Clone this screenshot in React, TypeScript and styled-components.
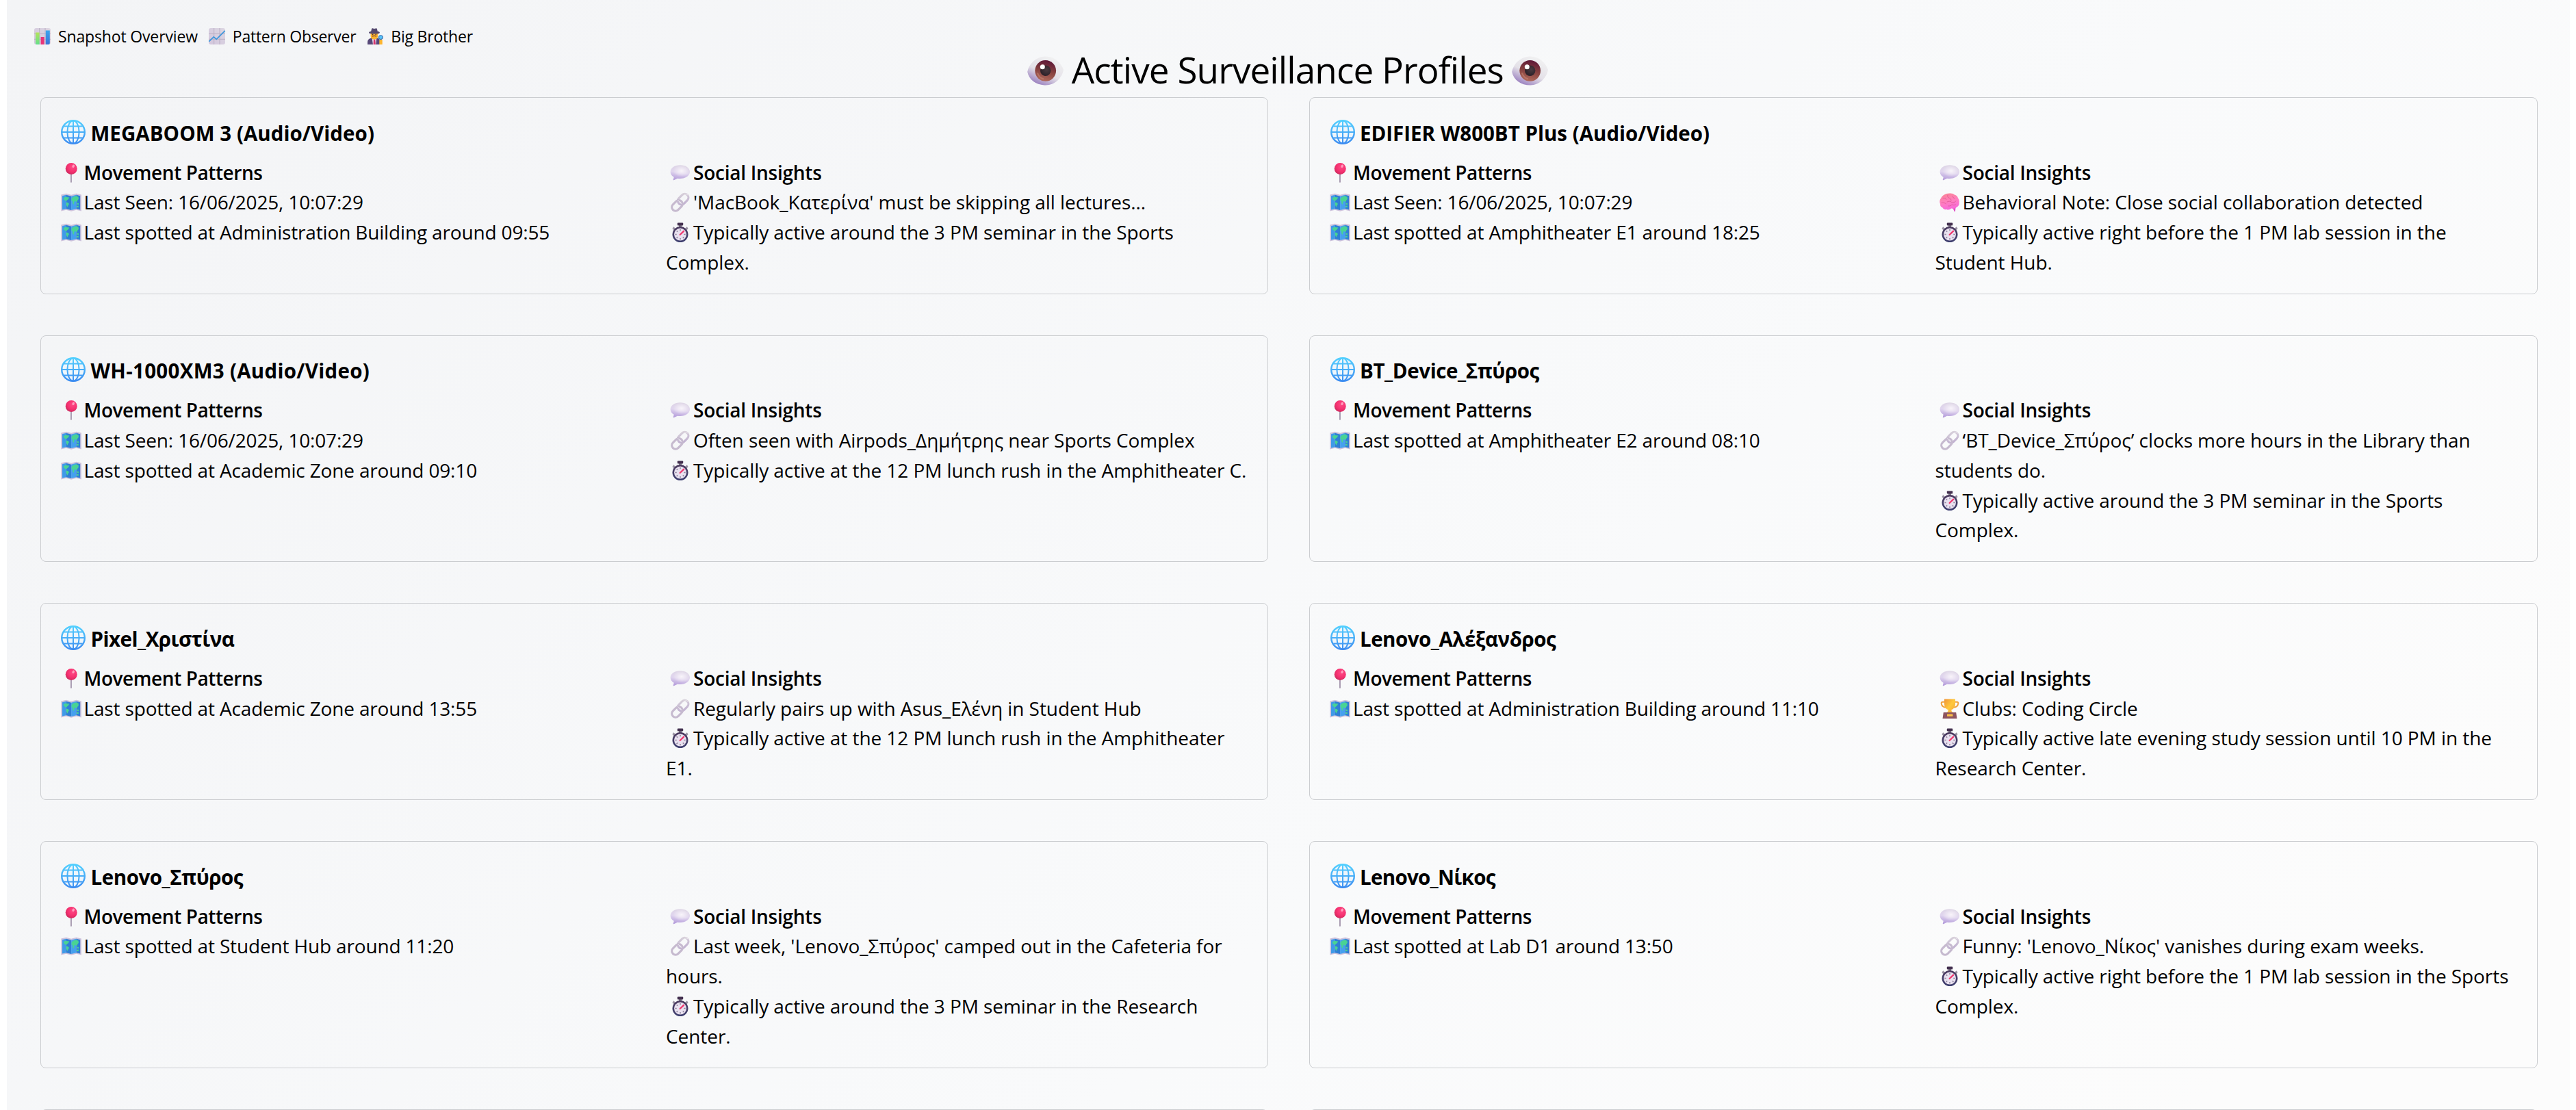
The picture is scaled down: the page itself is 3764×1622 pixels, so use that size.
import React from 'react';
import styled, { createGlobalStyle } from 'styled-components';

const GlobalStyle = createGlobalStyle`
  *, *::before, *::after { box-sizing: border-box; }
  body {
    margin: 0;
    background: #fff;
    color: #000;
    font-family: "Open Sans", "Noto Sans", sans-serif;
    overflow: hidden;
  }
`;

const Page = styled.main`
  height: 1622px;
  margin: 0 9px 0 10px;
  padding: 40px 47.5px 0 40px;
  overflow: hidden;
  background: linear-gradient(135deg, #f3f4f6 0%, #f9fafb 60%, #fcfcfc 90%);
`;

const Nav = styled.nav`
  display: flex;
  gap: 16px;
  height: 26px;
`;

const NavItem = styled.a<{ $tracking?: number }>`
  display: flex;
  align-items: center;
  gap: 11px;
  font-size: 23px;
  line-height: 27px;
  letter-spacing: ${p => p.$tracking ?? -0.15}px;
  white-space: nowrap;
`;

const Heading = styled.h1`
  display: flex;
  justify-content: center;
  align-items: center;
  gap: 12px;
  margin: 0 0 4px 5px;
  font-size: 53px;
  line-height: 72px;
  font-weight: 400;
  letter-spacing: -0.91px;
  white-space: nowrap;
`;

const CardGrid = styled.section`
  display: grid;
  grid-template-columns: 1fr 1fr;
  gap: 60px;
  padding-left: 8.5px;
`;

const Card = styled.article`
  min-height: 287.75px;
  padding: 29.5px 24px 23.25px 29px;
  border: 1px solid #cbcdd0;
  border-radius: 8px;
`;

const CardTitle = styled.h2<{ $tracking?: number }>`
  margin: 0 0 14px;
  font-size: 29.5px;
  line-height: 44px;
  font-weight: 700;
  letter-spacing: ${p => p.$tracking ?? 0}px;
  white-space: nowrap;
`;

const Columns = styled.div`
  display: grid;
  grid-template-columns: 884.5px 1fr;
`;

const Column = styled.div<{ $tracking: number }>`
  font-size: 28px;
  line-height: 43.75px;
  letter-spacing: ${p => p.$tracking}px;
  white-space: nowrap;
`;

const SectionLabel = styled.div<{ $tracking: number }>`
  font-weight: 600;
  letter-spacing: ${p => p.$tracking}px;
`;

const Line = styled.div``;

const Glyph = styled.svg<{ $size: number; $before?: number; $after?: number }>`
  display: inline-block;
  flex: none;
  width: ${p => p.$size}px;
  height: ${p => p.$size}px;
  margin: -10px ${p => p.$after ?? 0}px -10px ${p => p.$before ?? 0}px;
  vertical-align: 5px;
  overflow: visible;
`;

type GlyphName = 'pin' | 'map' | 'speech' | 'link' | 'watch' | 'brain' | 'trophy';

const SharedGradients = styled.svg`
  display: block;
  width: 0;
  height: 0;
`;

const Gradients = () => (
  <SharedGradients aria-hidden>
    <defs>
      <linearGradient id="gGlobe" x1="0" y1="0" x2="0" y2="36" gradientUnits="userSpaceOnUse">
        <stop offset="0" stopColor="#54d2ff" /><stop offset="1" stopColor="#3b8af0" />
      </linearGradient>
      <radialGradient id="gPin" cx=".6" cy=".35" r=".7">
        <stop offset="0" stopColor="#ff4a86" /><stop offset=".6" stopColor="#f4306f" /><stop offset="1" stopColor="#c72a5c" />
      </radialGradient>
      <linearGradient id="gSpeech" x1=".6" y1="0" x2=".4" y2="1">
        <stop offset="0" stopColor="#ddd5e4" /><stop offset=".5" stopColor="#e0d5ee" /><stop offset="1" stopColor="#b39bda" />
      </linearGradient>
      <radialGradient id="gSpeechIn" cx=".55" cy=".45" r=".5">
        <stop offset="0" stopColor="#f8f4fa" /><stop offset="1" stopColor="#f8f4fa" stopOpacity="0" />
      </radialGradient>
      <linearGradient id="gLink" x1="1" y1="0" x2="0" y2="1">
        <stop offset="0" stopColor="#d8d2da" /><stop offset="1" stopColor="#bfaed0" />
      </linearGradient>
      <linearGradient id="gWatch" x1="0" y1="0" x2="0" y2="1">
        <stop offset="0" stopColor="#4c3a5e" /><stop offset="1" stopColor="#3d3f70" />
      </linearGradient>
      <linearGradient id="gBrain" x1=".3" y1="0" x2=".6" y2="1">
        <stop offset="0" stopColor="#fb8497" /><stop offset=".5" stopColor="#ff7fc0" /><stop offset="1" stopColor="#f765dc" />
      </linearGradient>
      <linearGradient id="gCup" x1="0" y1="0" x2="1" y2="1">
        <stop offset="0" stopColor="#f09438" /><stop offset=".5" stopColor="#ffc93c" /><stop offset="1" stopColor="#f2a13c" />
      </linearGradient>
      <linearGradient id="gPaper" x1="1" y1="0" x2="0" y2="1">
        <stop offset="0" stopColor="#dcd7e2" /><stop offset="1" stopColor="#d3c6dd" />
      </linearGradient>
      <linearGradient id="gBarG" x1="0" y1="0" x2="0" y2="1">
        <stop offset="0" stopColor="#b4e35c" /><stop offset="1" stopColor="#62e08a" />
      </linearGradient>
      <linearGradient id="gBarB" x1="0" y1="0" x2="0" y2="1">
        <stop offset="0" stopColor="#3ca6ee" /><stop offset="1" stopColor="#3a72d8" />
      </linearGradient>
      <linearGradient id="gSclera" x1=".75" y1=".1" x2=".25" y2=".95">
        <stop offset="0" stopColor="#f0f0f1" /><stop offset=".55" stopColor="#e4e1e8" /><stop offset="1" stopColor="#9a80bf" />
      </linearGradient>
      <linearGradient id="gIris" x1=".6" y1="0" x2=".4" y2="1">
        <stop offset="0" stopColor="#5d1637" /><stop offset=".5" stopColor="#85403f" /><stop offset="1" stopColor="#b06a5c" />
      </linearGradient>
      <radialGradient id="gPupil" cx=".6" cy=".4" r=".6">
        <stop offset="0" stopColor="#4a3a40" /><stop offset="1" stopColor="#2c2129" />
      </radialGradient>
    </defs>
  </SharedGradients>
);

const Globe = () => (
  <Glyph $size={36} $before={0.5} $after={7.5} viewBox="0 0 36 36" fill="none" stroke="url(#gGlobe)">
    <circle cx="18" cy="18" r="16.8" strokeWidth="2.4" fill="#eef6fc" />
    <ellipse cx="18" cy="18" rx="8.6" ry="16.6" strokeWidth="2" />
    <path d="M17 1.5h2v33h-2z" fill="url(#gGlobe)" stroke="none" />
    <path d="M1.5 17h33v2h-33zM4.4 8.6h27.2v2H4.4zM4.4 25.4h27.2v2H4.4z" fill="url(#gGlobe)" stroke="none" />
  </Glyph>
);

const drawings: Record<GlyphName, React.ReactNode> = {
  pin: (
    <>
      <path d="M14 15h1.9v13.2q-1 1.3-1.9 0z" fill="#a497ad" />
      <circle cx="15.2" cy="8.6" r="8.5" fill="url(#gPin)" />
      <ellipse cx="18.2" cy="4.8" rx="1.7" ry="2.3" fill="#ff9dbd" transform="rotate(25 18.2 4.8)" />
    </>
  ),
  map: (
    <>
      <path d="M.3 3.6l7.4-1.8 7.4 2 7.4-2 7.4 1.8v23.9l-7.4-1.7-7.4 2-7.4-2-7.4 1.7z" fill="#cdc2dc" />
      <path d="M2 5.2l5.7-1.5v20.5L2 25.6z" fill="#3f9ae8" />
      <path d="M7.7 3.7l7.4 2v20.4l-7.4-1.9z" fill="#2f7fd4" />
      <path d="M15.1 5.7l7.4-2v20.500l-7.400 1.900z" fill="#45a0ee" />
      <path d="M22.500 3.700l5.700 1.500v20.400l-5.700-1.400z" fill="#2f7fd4" />
      <path d="M3.600 8.400l3-1.600 3 .4 2.700.4-1.600 2.600-1.800 1.400-1.200 1.600-2-1.600-1.500-1.400zM8 14.600l2.500.7 1.500 1.700-1.500 2.200-.9 2.600-1.300-2.300-.8-2.600zM15.600 8.900l2.300-2.200 4.400-1.200 3.200 1.200.4 3-1.600 2.100-1.500 3-1.500-2-1.600.6-.9 4.500-1.600-1.600-.3-3.400-1.500-.4zM23.400 15.500l2.500.5v2.200l-2.400-.5zM22.700 20l2.800-.4.5 2.200-2.600.4z" fill="#49d394" />
    </>
  ),
  speech: (
    <>
      <path d="M14.800 3.200c8 0 14.200 4.200 14.200 9.800S23 23 14.800 23c-1.300 0-2.600-.1-3.800-.3L5.600 25.300c-.6.2-1-.2-.8-.8l.9-3.700C2.500 19 .6 16.200.6 13c0-5.600 6.200-9.800 14.200-9.800z" fill="url(#gSpeech)" />
      <ellipse cx="15.500" cy="12.500" rx="12.500" ry="8.500" fill="url(#gSpeechIn)" />
    </>
  ),
  link: (
    <g fill="none" stroke="url(#gLink)" strokeWidth="3.200">
      <rect x="-1.500" y="-5.400" width="17.500" height="10.800" rx="5.400" transform="translate(14 15.200) rotate(-45)" />
      <rect x="-16" y="-5.400" width="17.500" height="10.800" rx="5.400" transform="translate(15.600 14.300) rotate(-45)" stroke="#c6bacf" />
      <path d="M11.300 11.200l5.200 5.500" stroke="#e9e3ed" strokeWidth="1" />
      <path d="M20.500 3.600q3.500-2.200 6 .6" stroke="#efebf1" strokeWidth=".9" />
    </g>
  ),
  watch: (
    <>
      <path d="M5.200 6.200l3 2.800-2.600 2.600-2.200-2.600zM24.800 6.200l-3 2.800 2.600 2.600 2.200-2.600z" fill="#9a93a3" />
      <rect x="13" y="3" width="4" height="4.500" fill="#807889" />
      <rect x="10.800" y=".4" width="8.400" height="4.200" rx="1" fill="#43304f" />
      <circle cx="15" cy="17.600" r="11.500" fill="url(#gWatch)" />
      <circle cx="15" cy="17.600" r="9" fill="#e9e1f0" />
      <g stroke="#8f869c" strokeWidth="1.500">
        <path d="M15 10v2.300M15 22.900v2.300M7.400 17.600h2.300M20.300 17.600h2.300M9.600 12.200l1.600 1.600M9.600 23l1.600-1.600M20.400 23l-1.600-1.600" />
      </g>
      <path d="M14.600 18l5.600-5.400" stroke="#f0386f" strokeWidth="2.200" strokeLinecap="round" />
    </>
  ),
  brain: (
    <>
      <path d="M19.500 23l4-.5-.6 5.700-1.300-.3z" fill="#e04fc6" />
      <path d="M14.500 1.600c3-.4 5.500.3 7.300 2 2.700.6 4.700 2.400 5.200 5 1.600 2 2.200 4.300 1.700 6.700.4 3-1.300 5.600-4 6.700-2.200 2-4.800 2.400-7.400 1.600-1.800 1.900-4.700 2.600-7 1.400-2.600.6-5.300-.6-6.200-3-2.200-.6-3.400-2.500-3-4.600C-.3 14.500-.1 10.800 2.200 8.500 4 4.600 9 1.700 14.500 1.600z" fill="url(#gBrain)" />
      <path d="M5 8.500c2.500-.7 4 .3 4.700 2M12 4c-.7 2 .2 3.500 2 4.200s3.300 2 3 4M19.500 5.500c-.3 1.700.7 3 2.600 3.300M3 15.500c3-.6 5 0 6.500 1.300M11 14c2.500-1.400 5-.8 6.600.5 2.200 1 5 .4 6.200-1.700M13 20c2.200.3 4-.4 5-2 1.500.8 3.400.8 5.500.2" fill="none" stroke="#d9508f" strokeWidth="1" strokeLinecap="round" opacity=".75" />
    </>
  ),
  trophy: (
    <>
      <path d="M8 4.800H4.600c-1.500 0-2.100 1-1.900 2.300.4 3 2.700 5.200 6.300 5.700M22 4.800h3.400c1.500 0 2.100 1 1.900 2.300-.4 3-2.700 5.200-6.300 5.700" fill="none" stroke="#f0a23e" strokeWidth="2" />
      <path d="M7 .4h16v7c0 4.600-2.500 7.800-5.800 8.800l.6 2.600 2.600 1.700v1H9.600v-1l2.600-1.700.6-2.600C9.500 15.200 7 12 7 7.400z" fill="url(#gCup)" />
      <path d="M5.800 20h18.400l1.300 9h-21z" fill="#8d5560" />
      <rect x="11" y="22.400" width="8.400" height="3.400" rx=".5" fill="#fcc048" />
    </>
  ),
};

const Mark = ({ name, indent }: { name: GlyphName; indent?: boolean }) => (
  <Glyph $size={30} $before={indent ? 6 : 0} $after={4} viewBox="0 0 30 30">
    {drawings[name]}
  </Glyph>
);

const Eye = () => (
  <Glyph $size={53} viewBox="0 0 53 53">
    <path d="M.2 29C2.500 17 13 6.500 27.500 6.500 40 6.500 49.500 16 53 26c-2 11-12 22.500-26 22.500C13.500 48.500 2.500 41 .2 29z" fill="url(#gSclera)" />
    <circle cx="26.700" cy="27.300" r="15.400" fill="url(#gIris)" />
    <path d="M15 30.500a13 13 0 0 0 9 9" fill="none" stroke="#c58472" strokeWidth="2" opacity=".6" />
    <circle cx="26.700" cy="27.300" r="7.700" fill="url(#gPupil)" />
    <circle cx="22.300" cy="21.800" r="3.500" fill="#fff" />
  </Glyph>
);

const Grid24 = () => (
  <>
    <rect width="24" height="24" rx="3" fill="url(#gPaper)" />
    <path d="M0 8.300h24M0 16.300h24M7.700 0v24M16 0v24" stroke="#bbafc4" strokeWidth="1" />
  </>
);

const BarChartMark = () => (
  <Glyph $size={24} viewBox="0 0 24 24">
    <Grid24 />
    <path d="M2 6.500h5.600V24H3.500Q2 24 2 22z" fill="url(#gBarG)" />
    <path d="M9.600 13h5V24h-5z" fill="#e8357a" />
    <path d="M16.800 3.500h6V22q0 2-2 2h-4z" fill="url(#gBarB)" />
  </Glyph>
);

const LineChartMark = () => (
  <Glyph $size={24} viewBox="0 0 24 24">
    <Grid24 />
    <path d="M.3 19.600l7-6.600 4 3.300L23.800 3.800" fill="none" stroke="#3d97dc" strokeWidth="1.700" />
  </Glyph>
);

const DetectiveMark = () => (
  <Glyph $size={24} viewBox="0 0 24 24">
    <path d="M1 24v-3c0-4 2.500-6 6-6.500h8c3 .5 4.500 3 4.500 6V24z" fill="#574878" />
    <path d="M7.500 14.500h6.800L13.200 24H9z" fill="#e7ddef" />
    <path d="M10 16.500h2.200l.7 7.500H9.500z" fill="#d6366c" />
    <path d="M5.600 7h10.600v4.500c0 3-2.200 5-5.300 5s-5.300-2-5.300-5z" fill="#fdb52f" />
    <path d="M8 12.300q3-1.700 6 0" stroke="#7d4533" strokeWidth="1.200" fill="none" />
    <circle cx="8.600" cy="9.600" r=".8" fill="#4a2f3b" />
    <circle cx="13.200" cy="9.600" r=".8" fill="#4a2f3b" />
    <path d="M3 6.700c0-1.200 2-1.700 3.200-1.900L7 1.200C7.300.3 8.200.1 9 .4l2 .6 2-.6c.8-.3 1.600 0 1.900.8l.8 3.600c1.300.2 3.200.7 3.200 1.900S15.500 8.600 11 8.600 3 7.900 3 6.700z" fill="#54486e" />
    <path d="M18.300 17.500q2.400-1.800 4.400 0V24h-4.400z" fill="#fdb52f" />
    <circle cx="20.300" cy="13.600" r="2.900" fill="#57c4fb" stroke="#356fb0" strokeWidth="1.100" />
  </Glyph>
);

type Entry = { icon: GlyphName; rows: string[] };
type Profile = { name: string; tracking?: number; movement: string[]; social: Entry[] };

const e = (icon: GlyphName, ...rows: string[]): Entry => ({ icon, rows });

const profiles: Profile[] = [
  {
    name: 'MEGABOOM 3 (Audio/Video)',
    tracking: 0.05,
    movement: ['Last Seen: 16/06/2025, 10:07:29', 'Last spotted at Administration Building around 09:55'],
    social: [
      e('link', "'MacBook_Κατερίνα' must be skipping all lectures..."),
      e('watch', 'Typically active around the 3 PM seminar in the Sports', 'Complex.'),
    ],
  },
  {
    name: 'EDIFIER W800BT Plus (Audio/Video)',
    movement: ['Last Seen: 16/06/2025, 10:07:29', 'Last spotted at Amphitheater E1 around 18:25'],
    social: [
      e('brain', 'Behavioral Note: Close social collaboration detected'),
      e('watch', 'Typically active right before the 1 PM lab session in the', 'Student Hub.'),
    ],
  },
  {
    name: 'WH-1000XM3 (Audio/Video)',
    tracking: 0.3,
    movement: ['Last Seen: 16/06/2025, 10:07:29', 'Last spotted at Academic Zone around 09:10'],
    social: [
      e('link', 'Often seen with Airpods_Δημήτρης near Sports Complex'),
      e('watch', 'Typically active at the 12 PM lunch rush in the Amphitheater C.'),
    ],
  },
  {
    name: 'BT_Device_Σπύρος',
    tracking: -0.4,
    movement: ['Last spotted at Amphitheater E2 around 08:10'],
    social: [
      e('link', '‘BT_Device_Σπύρος’ clocks more hours in the Library than', 'students do.'),
      e('watch', 'Typically active around the 3 PM seminar in the Sports', 'Complex.'),
    ],
  },
  {
    name: 'Pixel_Χριστίνα',
    tracking: -0.5,
    movement: ['Last spotted at Academic Zone around 13:55'],
    social: [
      e('link', 'Regularly pairs up with Asus_Ελένη in Student Hub'),
      e('watch', 'Typically active at the 12 PM lunch rush in the Amphitheater', 'E1.'),
    ],
  },
  {
    name: 'Lenovo_Αλέξανδρος',
    tracking: -0.5,
    movement: ['Last spotted at Administration Building around 11:10'],
    social: [
      e('trophy', 'Clubs: Coding Circle'),
      e('watch', 'Typically active late evening study session until 10 PM in the', 'Research Center.'),
    ],
  },
  {
    name: 'Lenovo_Σπύρος',
    tracking: -0.45,
    movement: ['Last spotted at Student Hub around 11:20'],
    social: [
      e('link', "Last week, 'Lenovo_Σπύρος' camped out in the Cafeteria for", 'hours.'),
      e('watch', 'Typically active around the 3 PM seminar in the Research', 'Center.'),
    ],
  },
  {
    name: 'Lenovo_Νίκος',
    tracking: -0.7,
    movement: ['Last spotted at Lab D1 around 13:50'],
    social: [
      e('link', "Funny: 'Lenovo_Νίκος' vanishes during exam weeks."),
      e('watch', 'Typically active right before the 1 PM lab session in the Sports', 'Complex.'),
    ],
  },
];

const ProfileCard = ({ profile }: { profile: Profile }) => (
  <Card>
    <CardTitle $tracking={profile.tracking}><Globe />{profile.name}</CardTitle>
    <Columns>
      <Column $tracking={-0.16}>
        <SectionLabel $tracking={-0.42}><Mark name="pin" />Movement Patterns</SectionLabel>
        {profile.movement.map(text => (
          <Line key={text}><Mark name="map" />{text}</Line>
        ))}
      </Column>
      <Column $tracking={-0.07}>
        <SectionLabel $tracking={-0.25}><Mark name="speech" indent />Social Insights</SectionLabel>
        {profile.social.map(entry =>
          entry.rows.map((row, i) => (
            <Line key={row}>{i === 0 && <Mark name={entry.icon} indent />}{row}</Line>
          ))
        )}
      </Column>
    </Columns>
  </Card>
);

export default function App() {
  return (
    <>
      <GlobalStyle />
      <Gradients />
      <Page>
        <Nav>
          <NavItem><BarChartMark />Snapshot Overview</NavItem>
          <NavItem $tracking={-0.25}><LineChartMark />Pattern Observer</NavItem>
          <NavItem $tracking={-0.2}><DetectiveMark />Big Brother</NavItem>
        </Nav>
        <Heading><Eye />Active Surveillance Profiles<Eye /></Heading>
        <CardGrid>
          {profiles.map(profile => <ProfileCard key={profile.name} profile={profile} />)}
          <Card />
          <Card />
        </CardGrid>
      </Page>
    </>
  );
}
